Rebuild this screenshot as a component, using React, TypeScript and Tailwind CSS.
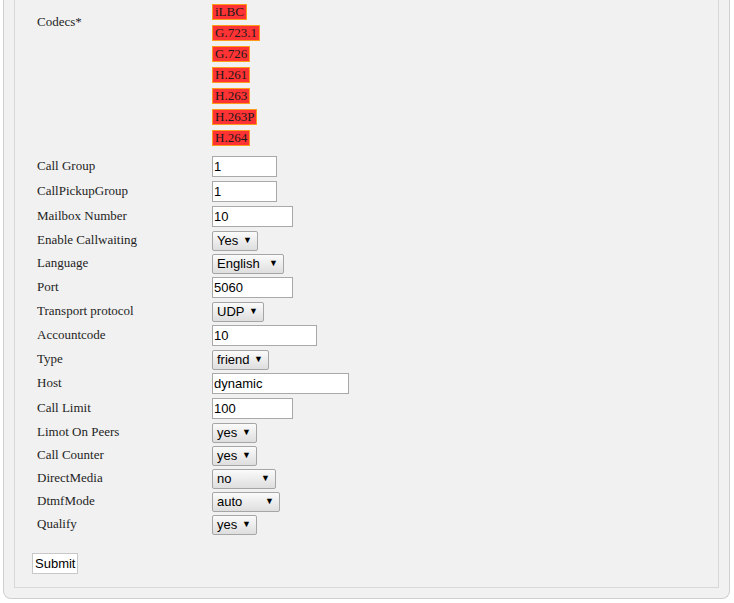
import React from 'react';

const CODECS = ['iLBC', 'G.723.1', 'G.726', 'H.261', 'H.263', 'H.263P', 'H.264'];

type Field =
  | { label: string; kind: 'input'; value: string; width: string }
  | { label: string; kind: 'select'; value: string; width: string };

const FIELDS: Field[] = [
  { label: 'Call Group', kind: 'input', value: '1', width: 'w-[65px]' },
  { label: 'CallPickupGroup', kind: 'input', value: '1', width: 'w-[65px]' },
  { label: 'Mailbox Number', kind: 'input', value: '10', width: 'w-[81px]' },
  { label: 'Enable Callwaiting', kind: 'select', value: 'Yes', width: 'w-[46px]' },
  { label: 'Language', kind: 'select', value: 'English', width: 'w-[72px]' },
  { label: 'Port', kind: 'input', value: '5060', width: 'w-[81px]' },
  { label: 'Transport protocol', kind: 'select', value: 'UDP', width: 'w-[52px]' },
  { label: 'Accountcode', kind: 'input', value: '10', width: 'w-[105px]' },
  { label: 'Type', kind: 'select', value: 'friend', width: 'w-[57px]' },
  { label: 'Host', kind: 'input', value: 'dynamic', width: 'w-[137px]' },
  { label: 'Call Limit', kind: 'input', value: '100', width: 'w-[81px]' },
  { label: 'Limot On Peers', kind: 'select', value: 'yes', width: 'w-[45px]' },
  { label: 'Call Counter', kind: 'select', value: 'yes', width: 'w-[45px]' },
  { label: 'DirectMedia', kind: 'select', value: 'no', width: 'w-[64px]' },
  { label: 'DtmfMode', kind: 'select', value: 'auto', width: 'w-[68px]' },
  { label: 'Qualify', kind: 'select', value: 'yes', width: 'w-[45px]' },
];

function FakeSelect({ value, width }: { value: string; width: string }) {
  return (
    <div
      className={`${width} h-[20px] flex items-center justify-between pl-[4px] pr-[5px] border border-[#a6a6a6] rounded-[2px] bg-gradient-to-b from-[#fbfbfb] to-[#dedede] text-[13px] text-black font-['Liberation_Sans',Arial,sans-serif]`}
    >
      <span className="leading-none">{value}</span>
      <span className="text-[9px] leading-none">▼</span>
    </div>
  );
}

function TextBox({ value, width }: { value: string; width: string }) {
  return (
    <input
      readOnly
      value={value}
      className={`${width} h-[21px] px-[1px] border border-[#a9a9a9] bg-white text-[13px] text-black font-['Liberation_Sans',Arial,sans-serif] outline-none`}
    />
  );
}

export default function App() {
  return (
    <div className="w-[734px] h-[603px] bg-white font-['Liberation_Serif','Times_New_Roman',serif] text-[13px] text-[#1e1e1e] overflow-hidden">
      <div className="ml-[3px] w-[727px] border-x border-b border-[#cfcfcf] rounded-b-[8px] bg-[#f1f1f1] px-[10px] pb-[10px]">
        <div className="border-x border-b border-[#d8d8d8] pl-[22px] pb-[13px]">
          {/* codecs */}
          <div className="flex">
            <div className="w-[175px] pt-[14px] leading-[15px]">Codecs*</div>
            <div className="flex flex-col pt-[4px] gap-[5px]">
              {CODECS.map((c) => (
                <span
                  key={c}
                  className="self-start h-[16px] px-[2px] border border-[#ff9a1a] bg-[#ff3333] leading-[14px] text-[#1a1a1a]"
                >
                  {c}
                </span>
              ))}
            </div>
          </div>

          <div className="mt-[8px]">
            {FIELDS.map((f) => (
              <div
                key={f.label}
                className={`flex items-center ${f.kind === 'input' ? 'h-[25px]' : 'h-[23px]'}`}
              >
                <div className="w-[175px] pb-[2px]">{f.label}</div>
                {f.kind === 'input' ? (
                  <TextBox value={f.value} width={f.width} />
                ) : (
                  <FakeSelect value={f.value} width={f.width} />
                )}
              </div>
            ))}
          </div>

          <button className="mt-[17px] -ml-[5px] h-[21px] px-[2px] border border-[#c8c8c8] bg-white text-[13px] text-black font-['Liberation_Sans',Arial,sans-serif]">
            Submit
          </button>
        </div>
      </div>
    </div>
  );
}
